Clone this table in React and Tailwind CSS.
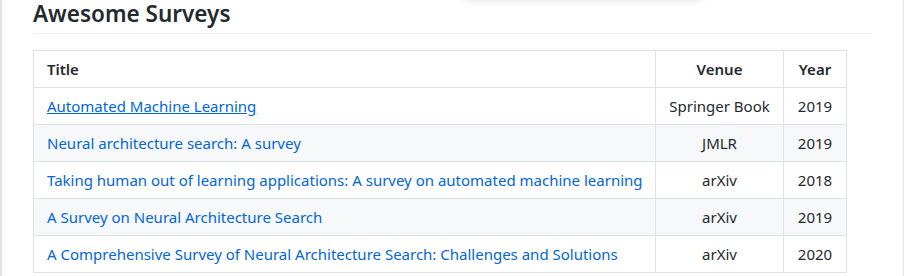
import React from 'react';

const surveys = [
  { title: 'Automated Machine Learning', venue: 'Springer Book', year: 2019, hover: true },
  { title: 'Neural architecture search: A survey', venue: 'JMLR', year: 2019 },
  { title: 'Taking human out of learning applications: A survey on automated machine learning', venue: 'arXiv', year: 2018 },
  { title: 'A Survey on Neural Architecture Search', venue: 'arXiv', year: 2019 },
  { title: 'A Comprehensive Survey of Neural Architecture Search: Challenges and Solutions', venue: 'arXiv', year: 2020 },
];

const App = () => {
  return (
    <div className="relative h-[276px] w-[905px] overflow-hidden bg-white font-['Noto_Sans',sans-serif] text-[15px] text-[#24292e]">
      {/* dropdown sticking out of the top */}
      <div className="absolute left-[462px] top-[-40px] h-[38px] w-[242px] rounded-md bg-white shadow-[0_2px_10px_rgba(0,0,0,0.12)]" />

      <div className="flex h-full w-[904px] border-l-2 border-r border-[#e1e4e8]">
        <div className="w-[870px] pl-[31px]">
          <h2 className="mt-0 border-b border-[#eaecef] pb-[5px] text-[22.5px] font-semibold leading-[1.25]">
            Awesome Surveys
          </h2>

          <table className="mt-4 w-[813px] table-fixed border-collapse leading-6">
            <thead>
              <tr className="border-t border-[#c6cbd1] bg-white">
                <th className="w-[622px] border border-[#dfe2e5] px-[13px] py-[6px] text-left font-semibold">Title</th>
                <th className="w-[128px] border border-[#dfe2e5] px-[13px] py-[6px] text-center font-semibold">Venue</th>
                <th className="w-[63px] border border-[#dfe2e5] px-[13px] py-[6px] text-center font-semibold">Year</th>
              </tr>
            </thead>
            <tbody>
              {surveys.map((s, i) => (
                <tr key={s.title} className={i % 2 === 1 ? 'bg-[#f6f8fa]' : 'bg-white'}>
                  <td className="whitespace-nowrap border border-[#dfe2e5] px-[13px] py-[6px]">
                    <a href="#" className={s.hover ? 'text-[#0366d6] underline' : 'text-[#0366d6]'}>
                      {s.title}
                    </a>
                  </td>
                  <td className="whitespace-nowrap border border-[#dfe2e5] px-[13px] py-[6px] text-center">{s.venue}</td>
                  <td className="border border-[#dfe2e5] px-[13px] py-[6px] text-center">{s.year}</td>
                </tr>
              ))}
            </tbody>
          </table>
        </div>
      </div>
    </div>
  );
};

export default App;
